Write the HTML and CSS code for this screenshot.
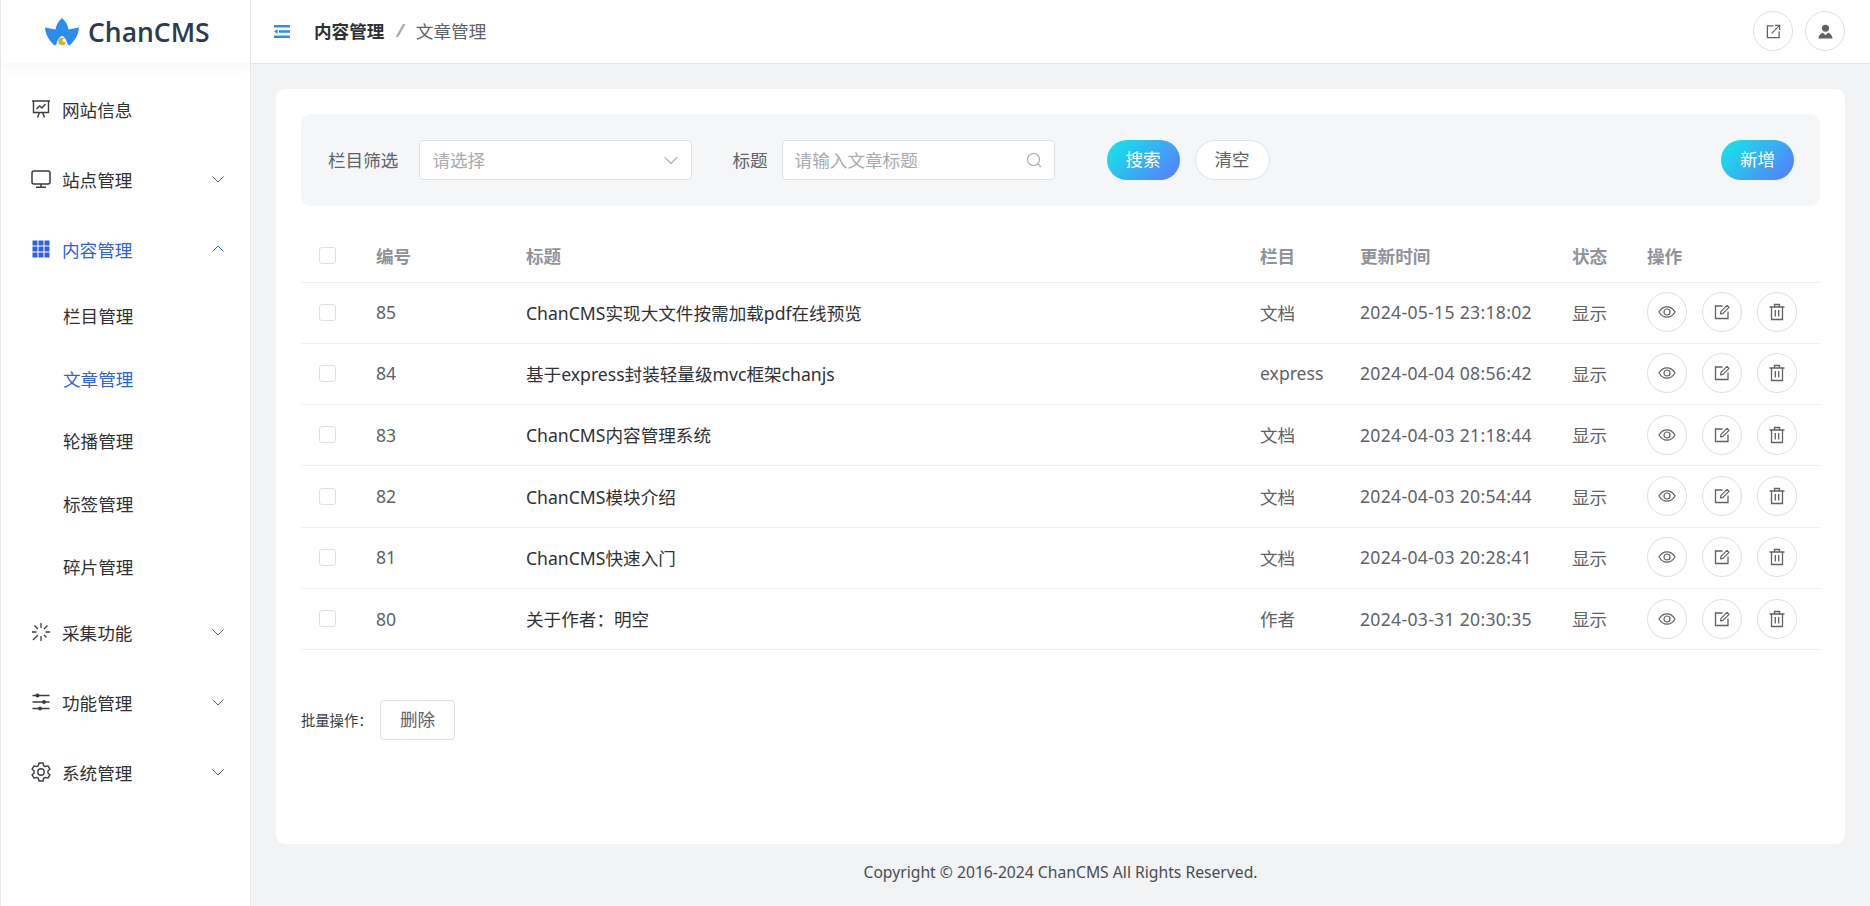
FILE: index.html
```html
<!DOCTYPE html>
<html lang="zh-CN">
<head>
  <meta charset="UTF-8">
  <meta name="viewport" content="width=device-width, initial-scale=1.0">
  <title>ChanCMS - 文章管理</title>
  <link rel="stylesheet" href="styles.css">
</head>
<body>
  <!-- icon sprites -->
  <svg class="sprites" xmlns="http://www.w3.org/2000/svg">
    <symbol id="i-eye" viewBox="0 0 18 18"><path d="M1 9c2-3.400 4.800-5.200 8-5.200s6 1.800 8 5.200c-2 3.400-4.800 5.200-8 5.200S3 12.400 1 9z" fill="none" stroke="currentColor" stroke-width="1.200"/><circle cx="9" cy="9" r="3" fill="none" stroke="currentColor" stroke-width="1.200"/></symbol>
    <symbol id="i-edit" viewBox="0 0 18 18"><path d="M9.500 3H2.500v12.500H15V8.500" fill="none" stroke="currentColor" stroke-width="1.300"/><path d="M7.500 10.800l.5-2.500 6-6 2 2-6 6z" fill="none" stroke="currentColor" stroke-width="1.200" stroke-linejoin="round"/></symbol>
    <symbol id="i-trash" viewBox="0 0 18 18"><path d="M1.500 4h15M6.500 4V1.500h5V4M3.500 4v12.500h11V4M7.300 7v6.500M10.700 7v6.500" fill="none" stroke="currentColor" stroke-width="1.300"/></symbol>
    <symbol id="i-down" viewBox="0 0 14 14"><path d="M1.500 4.500L7 10l5.500-5.500" fill="none" stroke="currentColor" stroke-width="1"/></symbol>
  </svg>

  <div class="layout">
    <aside class="sidebar">
      <div class="logo">
        <svg class="logo-mark" viewBox="0 0 36 29" xmlns="http://www.w3.org/2000/svg">
          <path d="M18 1c3.500 3 6 7 6.500 11.500L35 10.500c-.5 7-4 13-9 17.500-1 .6-2 .2-2.500-.8-1-4.500-3-7.700-5.500-8.200-2.500.5-4.500 3.700-5.500 8.200-.5 1-1.500 1.400-2.500.8C5 23.500 1.500 17.500 1 10.500l10.500 2C12 8 14.500 4 18 1z" fill="#2a8cf0"/>
          <circle cx="18" cy="24.500" r="3.800" fill="#d9ac33"/>
          <circle cx="20.200" cy="23.500" r="1.800" fill="#fff"/>
        </svg>
        <span class="logo-text">ChanCMS</span>
      </div>
      <nav class="menu">
        <a class="menu-item">
          <svg class="menu-icon" viewBox="0 0 20 20"><path d="M1 2h18M2.500 2v11.500h15V2M6.500 18.500l2-5M13.500 18.500l-2-5M5.500 10l3-3 2.500 2 3.500-4" fill="none" stroke="currentColor" stroke-width="1.400"/></svg>
          <span>网站信息</span>
        </a>
        <a class="menu-item">
          <svg class="menu-icon" viewBox="0 0 20 20"><rect x="1" y="2" width="18" height="13" rx="2" fill="none" stroke="currentColor" stroke-width="1.500"/><path d="M10 15v3.200M5 18.300h10" fill="none" stroke="currentColor" stroke-width="1.500"/></svg>
          <span>站点管理</span>
          <svg class="arrow"><use href="#i-down"/></svg>
        </a>
        <a class="menu-item active">
          <svg class="menu-icon" viewBox="0 0 20 20" fill="currentColor"><rect x="1.500" y="1.500" width="5" height="5"/><rect x="7.500" y="1.500" width="5" height="5"/><rect x="13.500" y="1.500" width="5" height="5"/><rect x="1.500" y="7.500" width="5" height="5"/><rect x="7.500" y="7.500" width="5" height="5"/><rect x="13.500" y="7.500" width="5" height="5"/><rect x="1.500" y="13.500" width="5" height="5"/><rect x="7.500" y="13.500" width="5" height="5"/><rect x="13.500" y="13.500" width="5" height="5"/></svg>
          <span>内容管理</span>
          <svg class="arrow arrow-up"><use href="#i-down"/></svg>
        </a>
        <a class="sub-item">栏目管理</a>
        <a class="sub-item active">文章管理</a>
        <a class="sub-item">轮播管理</a>
        <a class="sub-item">标签管理</a>
        <a class="sub-item">碎片管理</a>
        <a class="menu-item">
          <svg class="menu-icon" viewBox="0 0 20 20"><path d="M10 1v5M16.500 3.500L13 7M19 10h-4.500M15.500 15.500L13 13M10 14v5M7 13l-5 5M5.500 10H1M7 7L3.500 3.500" fill="none" stroke="currentColor" stroke-width="1.300"/></svg>
          <span>采集功能</span>
          <svg class="arrow"><use href="#i-down"/></svg>
        </a>
        <a class="menu-item">
          <svg class="menu-icon" viewBox="0 0 20 20"><path d="M1.500 3.500h17M1.500 10h17M1.500 16.500h17" fill="none" stroke="currentColor" stroke-width="1.500"/><circle cx="6.500" cy="3.500" r="2" fill="currentColor"/><circle cx="13" cy="10" r="2" fill="currentColor"/><circle cx="9" cy="16.500" r="2" fill="currentColor"/></svg>
          <span>功能管理</span>
          <svg class="arrow"><use href="#i-down"/></svg>
        </a>
        <a class="menu-item">
          <svg class="menu-icon" viewBox="0 0 20 20"><path d="M8 1h4l.6 2.600 1.700 1 2.600-.8 2 3.400-2 1.800v2l2 1.800-2 3.400-2.600-.8-1.700 1L12 19H8l-.6-2.600-1.700-1-2.600.8-2-3.400 2-1.800V9L1.100 7.200l2-3.400 2.600.8 1.700-1z" fill="none" stroke="currentColor" stroke-width="1.400" stroke-linejoin="round"/><circle cx="10" cy="10" r="3.200" fill="none" stroke="currentColor" stroke-width="1.400"/></svg>
          <span>系统管理</span>
          <svg class="arrow"><use href="#i-down"/></svg>
        </a>
      </nav>
    </aside>

    <div class="main">
      <header class="topbar">
        <svg class="fold" viewBox="0 0 16 13"><path d="M0 1.200h16M5 6.500h11M0 11.800h16" fill="none" stroke="#2d8cf0" stroke-width="2.400"/><path d="M0 6.500L3.500 4v5z" fill="#2d8cf0"/></svg>
        <div class="crumbs">
          <b>内容管理</b>
          <i>/</i>
          <span>文章管理</span>
        </div>
        <div class="top-actions">
          <button class="circle">
            <svg class="icon-top" viewBox="0 0 16 16"><path d="M8 2H1.500v12.500H14V8" fill="none" stroke="currentColor" stroke-width="1.400"/><path d="M6 10l8-8M9.500 1.500h5v5" fill="none" stroke="currentColor" stroke-width="1.400"/></svg>
          </button>
          <button class="circle">
            <svg class="icon-top" viewBox="0 0 16 16" fill="currentColor"><circle cx="8" cy="4.500" r="3.800"/><path d="M0.500 15.500c.3-3.400 2-5.600 4.800-6.300L8 12l2.700-2.800c2.800.7 4.500 2.900 4.800 6.300z"/></svg>
          </button>
        </div>
      </header>

      <div class="content">
        <section class="card">
          <div class="filter">
            <label class="filter-label">栏目筛选</label>
            <div class="field">
              <span class="placeholder">请选择</span>
              <svg class="field-icon"><use href="#i-down"/></svg>
            </div>
            <label class="filter-label second">标题</label>
            <div class="field">
              <span class="placeholder">请输入文章标题</span>
              <svg class="field-icon" viewBox="0 0 16 16"><circle cx="7.500" cy="7.500" r="6" fill="none" stroke="currentColor" stroke-width="1.100"/><path d="M12 12l3 3" stroke="currentColor" stroke-width="1.100"/></svg>
            </div>
            <button class="btn btn-grad btn-search">搜索</button>
            <button class="btn btn-clear">清空</button>
            <button class="btn btn-grad btn-add">新增</button>
          </div>

          <table class="list">
            <colgroup>
              <col class="c-check"><col class="c-id"><col class="c-title"><col class="c-cate"><col class="c-time"><col class="c-state"><col class="c-ops">
            </colgroup>
            <thead>
              <tr><th><span class="check"></span></th><th>编号</th><th>标题</th><th>栏目</th><th>更新时间</th><th>状态</th><th>操作</th></tr>
            </thead>
            <tbody>
              <tr>
                <td><span class="check"></span></td><td>85</td><td class="name">ChanCMS实现大文件按需加载pdf在线预览</td><td>文档</td><td class="time">2024-05-15 23:18:02</td><td>显示</td>
                <td><div class="ops"><button class="circle"><svg class="icon-op"><use href="#i-eye"/></svg></button><button class="circle"><svg class="icon-op"><use href="#i-edit"/></svg></button><button class="circle"><svg class="icon-op"><use href="#i-trash"/></svg></button></div></td>
              </tr>
              <tr>
                <td><span class="check"></span></td><td>84</td><td class="name">基于express封装轻量级mvc框架chanjs</td><td>express</td><td class="time">2024-04-04 08:56:42</td><td>显示</td>
                <td><div class="ops"><button class="circle"><svg class="icon-op"><use href="#i-eye"/></svg></button><button class="circle"><svg class="icon-op"><use href="#i-edit"/></svg></button><button class="circle"><svg class="icon-op"><use href="#i-trash"/></svg></button></div></td>
              </tr>
              <tr>
                <td><span class="check"></span></td><td>83</td><td class="name">ChanCMS内容管理系统</td><td>文档</td><td class="time">2024-04-03 21:18:44</td><td>显示</td>
                <td><div class="ops"><button class="circle"><svg class="icon-op"><use href="#i-eye"/></svg></button><button class="circle"><svg class="icon-op"><use href="#i-edit"/></svg></button><button class="circle"><svg class="icon-op"><use href="#i-trash"/></svg></button></div></td>
              </tr>
              <tr>
                <td><span class="check"></span></td><td>82</td><td class="name">ChanCMS模块介绍</td><td>文档</td><td class="time">2024-04-03 20:54:44</td><td>显示</td>
                <td><div class="ops"><button class="circle"><svg class="icon-op"><use href="#i-eye"/></svg></button><button class="circle"><svg class="icon-op"><use href="#i-edit"/></svg></button><button class="circle"><svg class="icon-op"><use href="#i-trash"/></svg></button></div></td>
              </tr>
              <tr>
                <td><span class="check"></span></td><td>81</td><td class="name">ChanCMS快速入门</td><td>文档</td><td class="time">2024-04-03 20:28:41</td><td>显示</td>
                <td><div class="ops"><button class="circle"><svg class="icon-op"><use href="#i-eye"/></svg></button><button class="circle"><svg class="icon-op"><use href="#i-edit"/></svg></button><button class="circle"><svg class="icon-op"><use href="#i-trash"/></svg></button></div></td>
              </tr>
              <tr>
                <td><span class="check"></span></td><td>80</td><td class="name">关于作者：明空</td><td>作者</td><td class="time">2024-03-31 20:30:35</td><td>显示</td>
                <td><div class="ops"><button class="circle"><svg class="icon-op"><use href="#i-eye"/></svg></button><button class="circle"><svg class="icon-op"><use href="#i-edit"/></svg></button><button class="circle"><svg class="icon-op"><use href="#i-trash"/></svg></button></div></td>
              </tr>
            </tbody>
          </table>

          <div class="batch">
            <span class="batch-label">批量操作：</span>
            <button class="btn btn-del">删除</button>
          </div>
        </section>
        <footer class="copyright">Copyright © 2016-2024 ChanCMS All Rights Reserved.</footer>
      </div>
    </div>
  </div>
</body>
</html>
```

FILE: styles.css
```css
* {
  box-sizing: border-box;
}
html, body {
  height: 100%;
}
body {
  margin: 0;
  overflow: hidden;
  font-family: "Noto Sans", "Noto Sans CJK SC", sans-serif;
  font-size: 17.6px;
  color: #303133;
  background-color: #f2f3f5;
}
button {
  font-family: inherit;
  cursor: pointer;
}
.sprites {
  position: absolute;
  width: 0;
  height: 0;
}
.layout {
  display: flex;
  height: 100%;
}

/* sidebar */
.sidebar {
  width: 251px;
  flex-shrink: 0;
  background-color: #fff;
  border-left: 1px solid #e8e9ec;
  border-right: 1px solid #e8e9ec;
}
.logo {
  display: flex;
  align-items: center;
  height: 63px;
  padding-left: 43px;
  box-shadow: 0 6px 12px rgba(0, 0, 0, 0.03);
}
.logo-mark {
  width: 36px;
  height: 29px;
}
.logo-text {
  margin-left: 8px;
  font-family: "Open Sans", sans-serif;
  font-size: 26.5px;
  font-weight: 600;
  color: #2b3a4e;
}
.menu {
  display: flex;
  flex-direction: column;
  padding-top: 11px;
}
.menu-item {
  display: flex;
  align-items: center;
  height: 70px;
  padding-left: 30px;
  padding-right: 25px;
}
.menu-item span {
  margin-left: -1px;
}
.menu-item.active {
  color: #2f62d8;
}
.menu-icon {
  width: 20px;
  height: 20px;
  margin-right: 12px;
  color: #3a3d42;
}
.menu-item.active .menu-icon {
  color: #2f62d8;
}
.arrow {
  width: 14px;
  height: 14px;
  margin-left: auto;
  color: #606266;
}
.arrow-up {
  transform: rotate(180deg);
  color: #2f62d8;
}
.sub-item {
  display: flex;
  align-items: center;
  height: 62.7px;
  padding-left: 62px;
}
.sub-item.active {
  color: #2f62d8;
}

/* top bar */
.main {
  flex: 1;
  min-width: 0;
  display: flex;
  flex-direction: column;
}
.topbar {
  display: flex;
  align-items: center;
  height: 64px;
  padding: 0 25px 1px 23px;
  background-color: #fff;
  border-bottom: 1px solid #e4e6ea;
}
.fold {
  width: 16px;
  height: 13px;
}
.crumbs {
  display: flex;
  align-items: center;
  margin-left: 24px;
  padding-bottom: 2px;
}
.crumbs b {
  font-weight: 700;
}
.crumbs i {
  margin: 0 12px;
  font-weight: 700;
  color: #a8abb2;
}
.crumbs span {
  color: #606266;
}
.top-actions {
  display: flex;
  gap: 12px;
  margin-left: auto;
}
.circle {
  display: flex;
  align-items: center;
  justify-content: center;
  width: 40px;
  height: 40px;
  padding: 0;
  color: #606266;
  background-color: #fff;
  border: 1px solid #dcdfe6;
  border-radius: 50%;
}
.icon-top {
  width: 15px;
  height: 15px;
}
.icon-op {
  width: 18px;
  height: 18px;
}

/* content */
.content {
  flex: 1;
  display: flex;
  flex-direction: column;
  padding: 25px 25px 0 25px;
}
.card {
  height: 755px;
  padding: 25px;
  background-color: #fff;
  border-radius: 9px;
}
.filter {
  display: flex;
  align-items: center;
  height: 92px;
  padding: 0 26px 0 27px;
  background-color: #f5f6f7;
  border-radius: 9px;
}
.filter-label {
  margin-right: 21px;
  padding-bottom: 2px;
  color: #606266;
}
.filter-label.second {
  margin-left: 40px;
  margin-right: 14px;
}
.field {
  display: flex;
  align-items: center;
  justify-content: space-between;
  width: 273px;
  height: 40px;
  padding: 0 12px;
  background-color: #fff;
  border: 1px solid #dcdfe6;
  border-radius: 4px;
}
.placeholder {
  padding-bottom: 2px;
  color: #a8abb2;
}
.field-icon {
  width: 16px;
  height: 16px;
  color: #a8abb2;
}
.btn {
  height: 40px;
  padding: 0 0 3px;
  font-size: 17.6px;
  color: #606266;
  background-color: #fff;
  border: 1px solid #dcdfe6;
  border-radius: 4px;
}
.btn-grad {
  width: 73px;
  color: #fff;
  border: none;
  border-radius: 20px;
  background-image: linear-gradient(135deg, #11ebe6, #5c77fd);
}
.btn-search {
  margin-left: 52px;
}
.btn-clear {
  width: 75px;
  margin-left: 15px;
  border-radius: 20px;
}
.btn-add {
  margin-left: auto;
}

/* table */
.list {
  width: 100%;
  margin-top: 24px;
  border-collapse: collapse;
  table-layout: fixed;
}
.c-check { width: 75px; }
.c-id { width: 150px; }
.c-title { width: 734px; }
.c-cate { width: 100px; }
.c-time { width: 212px; }
.c-state { width: 75px; }
.c-ops { width: 173px; }
.list th {
  height: 52px;
  padding: 0;
  text-align: left;
  font-weight: 700;
  color: #909399;
  border-bottom: 1px solid #ebeef5;
}
.list td {
  height: 61.33px;
  padding: 0 0 1px;
  color: #606266;
  border-bottom: 1px solid #ebeef5;
}
.list td.name {
  color: #303133;
}
.list td.time {
  letter-spacing: 0.3px;
}
.check {
  display: block;
  width: 17px;
  height: 17px;
  margin-left: 18px;
  background-color: #fff;
  border: 1px solid #dcdfe6;
  border-radius: 3px;
}
.ops {
  display: flex;
  gap: 15px;
}

/* batch */
.batch {
  display: flex;
  align-items: center;
  margin-top: 50px;
}
.batch-label {
  width: 79px;
  padding-bottom: 2px;
  font-size: 14.3px;
  color: #3a3d42;
}
.btn-del {
  width: 75px;
}

.copyright {
  padding-top: 17px;
  text-align: center;
  font-size: 15.7px;
  color: #4a4d52;
}
```
